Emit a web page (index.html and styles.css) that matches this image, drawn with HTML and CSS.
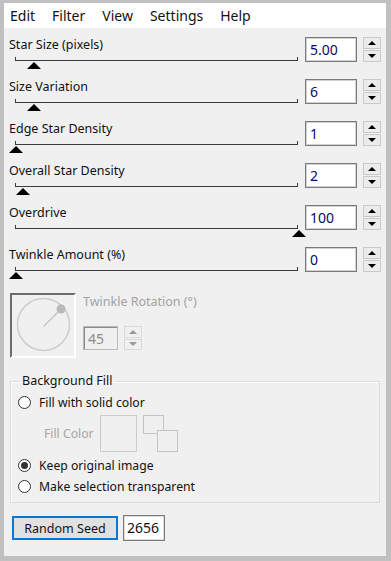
FILE: index.html
```html
<!DOCTYPE html>
<html lang="en">
<head>
    <meta charset="UTF-8">
    <title>Star Field</title>
    <link rel="stylesheet" href="styles.css">
</head>
<body>
    <div class="window">
        <div class="menubar">
            <span class="menu-item">Edit</span>
            <span class="menu-item">Filter</span>
            <span class="menu-item">View</span>
            <span class="menu-item">Settings</span>
            <span class="menu-item">Help</span>
        </div>

        <div class="panel">
            <div class="param">
                <div class="param-left">
                    <div class="label">Star Size (pixels)</div>
                    <div class="slider"><span class="thumb" style="left: 6.2%"></span></div>
                </div>
                <div class="numbox">5.00</div>
                <div class="spinner"><span class="spin-up"></span><span class="spin-down"></span></div>
            </div>
            <div class="param">
                <div class="param-left">
                    <div class="label">Size Variation</div>
                    <div class="slider"><span class="thumb" style="left: 6.2%"></span></div>
                </div>
                <div class="numbox">6</div>
                <div class="spinner"><span class="spin-up"></span><span class="spin-down"></span></div>
            </div>
            <div class="param">
                <div class="param-left">
                    <div class="label">Edge Star Density</div>
                    <div class="slider"><span class="thumb" style="left: 0%"></span></div>
                </div>
                <div class="numbox">1</div>
                <div class="spinner"><span class="spin-up"></span><span class="spin-down"></span></div>
            </div>
            <div class="param">
                <div class="param-left">
                    <div class="label">Overall Star Density</div>
                    <div class="slider"><span class="thumb" style="left: 2.5%"></span></div>
                </div>
                <div class="numbox">2</div>
                <div class="spinner"><span class="spin-up"></span><span class="spin-down"></span></div>
            </div>
            <div class="param">
                <div class="param-left">
                    <div class="label">Overdrive</div>
                    <div class="slider"><span class="thumb" style="left: 100%"></span></div>
                </div>
                <div class="numbox">100</div>
                <div class="spinner"><span class="spin-up"></span><span class="spin-down"></span></div>
            </div>
            <div class="param">
                <div class="param-left">
                    <div class="label">Twinkle Amount (%)</div>
                    <div class="slider"><span class="thumb" style="left: 0%"></span></div>
                </div>
                <div class="numbox">0</div>
                <div class="spinner"><span class="spin-up"></span><span class="spin-down"></span></div>
            </div>

            <div class="twinkle">
                <div class="dial">
                    <svg width="62" height="61" viewBox="0 0 62 61">
                        <circle cx="31.5" cy="29.5" r="26" fill="none" stroke="#cdcdcd" stroke-width="1.5"/>
                        <line x1="31.5" y1="31.5" x2="49" y2="14" stroke="#c4c4c4" stroke-width="1.5"/>
                        <circle cx="49" cy="14" r="4.5" fill="#b9b9b9"/>
                    </svg>
                </div>
                <div class="twinkle-right">
                    <div class="label disabled">Twinkle Rotation (°)</div>
                    <div class="twinkle-input">
                        <div class="numbox small disabled">45</div>
                        <div class="spinner small disabled"><span class="spin-up"></span><span class="spin-down"></span></div>
                    </div>
                </div>
            </div>

            <fieldset class="group">
                <legend class="group-title">Background Fill</legend>
                <div class="radio-row first"><span class="radio"></span>Fill with solid color</div>
                <div class="fill-row">
                    <span class="fill-label">Fill Color</span>
                    <span class="swatch"></span>
                    <span class="swap">
                        <span class="swap-back"></span>
                        <span class="swap-front"></span>
                    </span>
                </div>
                <div class="radio-row"><span class="radio checked"></span>Keep original image</div>
                <div class="radio-row"><span class="radio"></span>Make selection transparent</div>
            </fieldset>

            <div class="seed-row">
                <button class="seed-button">Random Seed</button>
                <div class="seed-box">2656</div>
            </div>
        </div>
    </div>
</body>
</html>
```

FILE: styles.css
```css
html, body {
    margin: 0;
    padding: 0;
}

body {
    background: #bfbfbf;
    font-family: "Noto Sans", "Open Sans", sans-serif;
    font-size: 12px;
    color: #111;
}

.window {
    width: 382px;
    height: 553px;
    border-style: solid;
    border-color: #c0c0c0;
    border-width: 3px 5px 5px 4px;
    background: #f0f0f0;
    display: flex;
    flex-direction: column;
}

.menubar {
    height: 25px;
    background: #fff;
    display: flex;
    align-items: center;
    gap: 17px;
    padding-left: 6px;
    font-size: 14px;
}

.panel {
    flex: 1;
    padding: 4px 6px 0 5px;
}

.param {
    height: 42px;
    display: grid;
    grid-template-columns: 289px 52px 17px;
    column-gap: 7px;
    align-items: start;
}

.param .spinner {
    margin-left: -1px;
}

.label {
    line-height: 16px;
    margin-top: 5px;
    white-space: nowrap;
    font-size: 12.5px;
}

.label.disabled {
    color: #a3a3a3;
}

.slider {
    position: relative;
    height: 14px;
    margin-left: 6px;
}

/* track with the two end ticks pointing up */
.slider::before {
    content: "";
    position: absolute;
    left: 0;
    right: 0;
    top: 4px;
    height: 3px;
    border-bottom: 1px solid #3c3c3c;
    border-left: 1px solid #3c3c3c;
    border-right: 1px solid #3c3c3c;
}

.thumb {
    position: absolute;
    top: 9px;
    width: 0;
    height: 0;
    margin-left: -6px;
    border-left: 7px solid transparent;
    border-right: 7px solid transparent;
    border-bottom: 7px solid #000;
}

.numbox {
    margin-top: 5px;
    height: 25px;
    box-sizing: border-box;
    border: 1px solid #7a7a7a;
    box-shadow: inset 0 0 0 1px #d2d2d2, inset 1px 1px 0 2px #fff;
    background: #fff;
    padding: 2px 0 0 4px;
    font-size: 14px;
    line-height: 19px;
    color: #0a0a6a;
}

.spinner {
    margin-top: 5px;
    height: 25px;
    display: flex;
    flex-direction: column;
    gap: 1px;
}

.spin-up,
.spin-down {
    flex: 1;
    box-sizing: border-box;
    border: 1px solid #c9c9c9;
    background: #ececec;
    display: flex;
    align-items: center;
    justify-content: center;
}

.spin-up::after,
.spin-down::after {
    content: "";
    width: 0;
    height: 0;
    border-left: 4px solid transparent;
    border-right: 4px solid transparent;
}

.spin-up::after {
    border-bottom: 4px solid #000;
}

.spin-down::after {
    border-top: 4px solid #000;
}

.spinner.disabled .spin-up::after {
    border-bottom-color: #9a9a9a;
}

.spinner.disabled .spin-down::after {
    border-top-color: #9a9a9a;
}

.twinkle {
    display: flex;
    margin: 9px 0 0 1px;
    gap: 7px;
}

.dial {
    width: 66px;
    height: 65px;
    box-sizing: border-box;
    border-top: 2px solid #6c6c6c;
    border-left: 2px solid #6c6c6c;
    border-right: 2px solid #fff;
    border-bottom: 2px solid #fff;
}

.dial svg {
    display: block;
}

.twinkle-right .label {
    margin-top: 1px;
}

.twinkle-input {
    display: flex;
    gap: 6px;
    margin-top: 16px;
}

.numbox.small {
    margin-top: 0;
    width: 35px;
    height: 24px;
    color: #8c8c8c;
    border-color: #b9b9b9;
    box-shadow: inset 1px 1px 0 0 #8a8a8a;
}

.numbox.disabled {
    background: #f0f0f0;
}

.spinner.small {
    margin-top: 0;
    width: 18px;
    height: 24px;
}

.spinner.disabled .spin-up,
.spinner.disabled .spin-down {
    border-color: #dadada;
    background: #f0f0f0;
}

.group {
    margin: 15px 0 0 1px;
    width: 370px;
    box-sizing: border-box;
    border: 1px solid #dcdcdc;
    box-shadow: inset 1px 1px 0 #fff;
    padding: 0 0 5px 7px;
}

.group-title {
    padding: 0 2px;
    margin-left: 2px;
    line-height: 16px;
    font-size: 12.5px;
}

.radio-row {
    height: 21px;
    display: flex;
    align-items: center;
    gap: 8px;
    font-size: 12.2px;
}

.radio-row.first {
    margin-top: 3px;
}

.radio {
    width: 13px;
    height: 13px;
    box-sizing: border-box;
    border: 1px solid #333;
    border-radius: 50%;
    background: #fff;
    display: flex;
    align-items: center;
    justify-content: center;
}

.radio.checked::after {
    content: "";
    width: 7px;
    height: 7px;
    border-radius: 50%;
    background: #333;
}

.fill-row {
    height: 37px;
    margin: 2px 0 3px 26px;
    display: flex;
    align-items: center;
    font-size: 12.2px;
}

.fill-label {
    color: #a5a5a5;
    width: 56px;
}

.swatch {
    width: 37px;
    height: 37px;
    box-sizing: border-box;
    border: 1px solid #cdcdcd;
}

.swap {
    position: relative;
    width: 35px;
    height: 37px;
    margin-left: 6px;
}

.swap-back,
.swap-front {
    position: absolute;
    box-sizing: border-box;
    border: 1px solid #c4c4c4;
    background: #f0f0f0;
}

.swap-back {
    left: 0;
    top: 0;
    width: 21px;
    height: 19px;
}

.swap-front {
    left: 14px;
    top: 15px;
    width: 21px;
    height: 22px;
}

.seed-row {
    display: flex;
    align-items: center;
    gap: 5px;
    margin: 12px 0 0 3px;
}

.seed-button {
    width: 106px;
    height: 24px;
    box-sizing: border-box;
    border: 2px solid #0078d7;
    background: #e1e1e1;
    font-family: inherit;
    font-size: 12.5px;
    color: #111;
    padding: 0;
}

.seed-box {
    width: 42px;
    height: 26px;
    box-sizing: border-box;
    border: 1px solid #7a7a7a;
    box-shadow: inset 0 0 0 1px #dcdcdc;
    background: #fff;
    padding: 3px 0 0 3px;
    font-size: 14px;
    line-height: 18px;
}
```
